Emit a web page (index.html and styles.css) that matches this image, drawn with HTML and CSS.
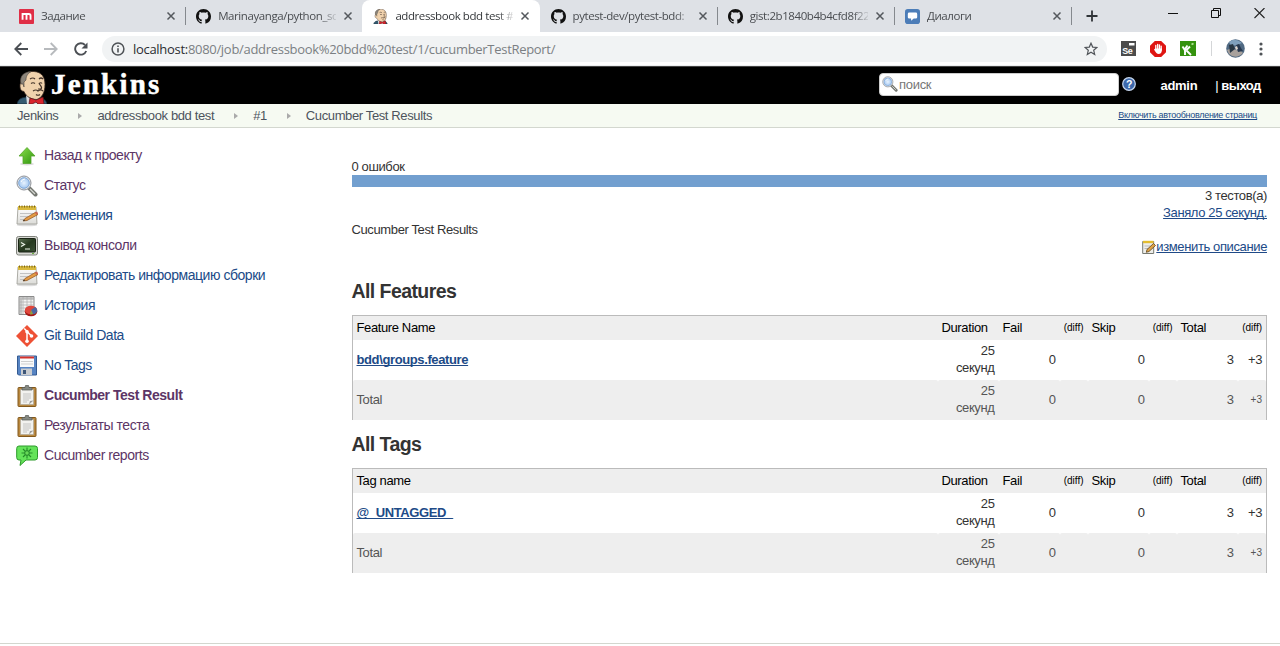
FILE: index.html
```html
<!DOCTYPE html>
<html lang="ru">
<head>
<meta charset="utf-8">
<title>addressbook bdd test #1</title>
<link rel="stylesheet" href="styles.css">
</head>
<body>
<svg class="defs" width="0" height="0">
  <defs>
    <linearGradient id="gGreen" x1="0" y1="0" x2="1" y2="1"><stop offset="0" stop-color="#8be04b"/><stop offset="1" stop-color="#2f9410"/></linearGradient>
    <linearGradient id="gScreen" x1="0" y1="0" x2="1" y2="1"><stop offset="0" stop-color="#5a7052"/><stop offset=".5" stop-color="#26391f"/><stop offset="1" stop-color="#3b4f35"/></linearGradient>
    <linearGradient id="gPaper" x1="0" y1="0" x2="0" y2="1"><stop offset="0" stop-color="#fff"/><stop offset="1" stop-color="#dcdcd8"/></linearGradient>
    <radialGradient id="gLens"><stop offset="0" stop-color="#e8f3ff"/><stop offset="1" stop-color="#a5c8f0"/></radialGradient>
  </defs>
  <symbol id="i-close" viewBox="0 0 10 10"><path d="M1.500 1.500l7 7M8.500 1.500l-7 7" stroke="#54585d" stroke-width="1.500" fill="none"/></symbol>
  <symbol id="i-github" viewBox="0 0 16 16"><path fill="#111" d="M8 0C3.580 0 0 3.580 0 8c0 3.540 2.290 6.530 5.470 7.590.4.070.55-.17.55-.38 0-.19-.01-.82-.01-1.490-2.010.37-2.530-.49-2.690-.94-.09-.23-.48-.94-.82-1.130-.28-.15-.68-.52-.01-.53.63-.01 1.080.58 1.230.82.720 1.210 1.870.87 2.330.66.070-.52.280-.87.510-1.070-1.780-.2-3.640-.89-3.640-3.950 0-.87.310-1.590.82-2.150-.08-.2-.36-1.020.080-2.120 0 0 .67-.21 2.200.82.640-.18 1.320-.27 2-.27s1.360.09 2 .27c1.530-1.040 2.200-.82 2.200-.82.440 1.100.160 1.920.080 2.120.510.560.820 1.270.820 2.150 0 3.070-1.870 3.750-3.650 3.950.290.250.540.730.540 1.480 0 1.070-.01 1.930-.01 2.200 0 .210.150.460.550.380A8.010 8.010 0 0 0 16 8c0-4.420-3.580-8-8-8z"/></symbol>
  <symbol id="i-jenkins" viewBox="0 0 30 33">
    <path d="M0 33c1-5 4-6 9-7h12c5 1 8 3 9 7z" fill="#345a70" stroke="#182b38" stroke-width=".8"/>
    <path d="M9 24l1 9h11l1-9z" fill="#d9dde0"/>
    <path d="M4 12C3 4 10 0 17 0.500c8 .5 11 6 11 13 0 8-3 13-8 15-6 0-11-3-13-8-3 0-4-3-4-5 0-2 0-3 1-3.500z" fill="#f0d2ad" stroke="#3a2a20" stroke-width=".8"/>
    <path d="M4 13C2 5 7 1 14 .6 10 3 9 6 9 9l-2 2v5l-1-3z" fill="#8c857b" stroke="#4a423a" stroke-width=".6"/>
    <path d="M13 8q3-2 5 0M22 8q2-2 4 0M14 12.500q2-1.500 4 0M22 12.500q2-1.500 3 0M22 12c1 3 4 4 2 6l-3 0M16 20q3-2 5 0 3-2 5 0M19 23.500q2 1.500 4 0" fill="none" stroke="#44342a" stroke-width="1.200"/>
    <path d="M13 27l6 2 7-3 1 7h-6l-2-2-4 2h-3z" fill="#d8242c" stroke="#61161a" stroke-width=".8"/>
  </symbol>
  <symbol id="i-lens" viewBox="0 0 22 22">
    <path d="M13 13l6.500 6.500" stroke="#737670" stroke-width="4" stroke-linecap="round"/><path d="M14 14l5 5" stroke="#d5d7d2" stroke-width="1.300"/>
    <circle cx="8" cy="8" r="7" fill="#e6e8e8" stroke="#8d9199" stroke-width="1"/><circle cx="8" cy="8" r="5.300" fill="url(#gLens)" stroke="#7fa8da"/>
    <path d="M5 7q1-3 4-3" stroke="#fff" fill="none"/>
  </symbol>
  <symbol id="i-note" viewBox="0 0 22 22">
    <ellipse cx="11" cy="20" rx="10.500" ry="1.300" fill="#ddd"/>
    <path d="M2 2h18l1 17H1z" fill="url(#gPaper)" stroke="#a3a39c" stroke-width=".9"/>
    <path d="M2 1h18v4H2z" fill="#d9b93c"/><path d="M3 1.500h16" stroke="#7b661c" stroke-dasharray="1 1.500" stroke-width="2"/>
    <path d="M4 8.500h13M4 11.500h8M4 14.500h5" stroke="#c2c2c2"/>
    <path d="M9 13.500L20 7l2 2.500-11 6-4 .5z" fill="#e39b43" stroke="#8d4f1b" stroke-width=".7"/><path d="M19 7.500l2-1 1.200 2-2 1.200z" fill="#c76250"/><path d="M7 16l1-1.500 1.200 1.200z" fill="#333"/>
  </symbol>
  <symbol id="i-clip" viewBox="0 0 20 22">
    <rect x="1" y="2.500" width="18" height="19" rx=".8" fill="#b9883f" stroke="#83591c"/>
    <path d="M3.500 4.500h13V19.500h-13z" fill="#f2f2ef" stroke="#aaa79f" stroke-width=".6"/>
    <path d="M6 9h8M6 11h8M6 13h8M6 15h6M6 17h4" stroke="#bebebe" stroke-width=".9"/>
    <path d="M12 19.500l1-3.500 3.500-.5z" fill="#9b9b98"/>
    <path d="M5 5V2.500h3L8.500.5h3l.5 2h3V5z" fill="#858983" stroke="#565954" stroke-width=".7"/>
  </symbol>
</svg>

<header class="tabs">
  <div class="tab"><svg class="fav" viewBox="0 0 16 16"><rect width="16" height="16" rx="1" fill="#e02e46"/><path d="M3.800 11.500V5.300H10.500q1.800 0 1.800 2v4.200M8 5.500v6" fill="none" stroke="#fff" stroke-width="2"/></svg><span class="tab-title">Задание</span><svg class="x"><use href="#i-close"/></svg></div>
  <div class="tab tab-line"><svg class="fav"><use href="#i-github"/></svg><span class="tab-title">Marinayanga/python_sc</span><svg class="x"><use href="#i-close"/></svg></div>
  <div class="tab active"><svg class="fav"><use href="#i-jenkins"/></svg><span class="tab-title">addressbook bdd test #</span><svg class="x"><use href="#i-close"/></svg></div>
  <div class="tab"><svg class="fav"><use href="#i-github"/></svg><span class="tab-title">pytest-dev/pytest-bdd:</span><svg class="x"><use href="#i-close"/></svg></div>
  <div class="tab tab-line"><svg class="fav"><use href="#i-github"/></svg><span class="tab-title">gist:2b1840b4b4cfd8f22</span><svg class="x"><use href="#i-close"/></svg></div>
  <div class="tab tab-line"><svg class="fav" viewBox="0 0 16 16"><rect width="16" height="16" rx="3" fill="#4c7db8"/><path d="M4.500 3.800h7q1.500 0 1.500 1.500v3.400q0 1.500-1.500 1.500H9.300L6.500 12.500v-2.300h-2Q3 10.200 3 8.700V5.300q0-1.500 1.500-1.500z" fill="#fff"/></svg><span class="tab-title">Диалоги</span><svg class="x"><use href="#i-close"/></svg></div>
  <div class="new-tab tab-line"><svg width="12" height="12"><path d="M6 .5v11M.5 6h11" stroke="#303438" stroke-width="1.800"/></svg></div>
  <div class="win">
    <svg width="10" height="12"><path d="M0 5.500h10" stroke="#111"/></svg>
    <svg width="10" height="12" fill="none" stroke="#111"><path d="M.5 2.500h7v7h-7zM2.500 2.500v-2h7v7h-2"/></svg>
    <svg width="11" height="12"><path d="M.5 0l10 10M10.500 0l-10 10" stroke="#222" stroke-width="1.100"/></svg>
  </div>
</header>

<div class="toolbar">
  <div class="nav">
    <svg width="14" height="14" fill="none" stroke="#4b4f54" stroke-width="1.800"><path d="M14 7H1.500M7.300 1L1.300 7l6 6"/></svg>
    <svg width="14" height="14" fill="none" stroke="#b7babd" stroke-width="1.800"><path d="M0 7h12.500M6.700 1l6 6-6 6"/></svg>
    <svg width="14" height="14"><path d="M12.200 9A5.700 5.700 0 1 1 11 3" fill="none" stroke="#4b4f54" stroke-width="1.900"/><path d="M13.500.5v6h-6z" fill="#4b4f54"/></svg>
  </div>
  <div class="omni">
    <svg width="14" height="14"><circle cx="7" cy="7" r="5.900" fill="none" stroke="#4f5357" stroke-width="1.500"/><path d="M7 6.200v4.200M7 3.400v1.600" stroke="#4f5357" stroke-width="1.600"/></svg>
    <span class="url"><b>localhost:</b>8080/job/addressbook%20bdd%20test/1/cucumberTestReport/</span>
    <svg width="14" height="14" viewBox="0 0 14 14"><path d="M7 1.200l1.700 3.900 4.200.4-3.200 2.800 1 4.100L7 10.200l-3.700 2.200 1-4.100L1.100 5.500l4.200-.4z" fill="none" stroke="#505459" stroke-width="1.200"/></svg>
  </div>
  <div class="ext">
    <svg width="15" height="15"><path d="M0 0h15v15H0z" fill="#4c4c4c"/><path d="M8 2h5.500v2.500H8z" fill="#fff"/><text x="1.200" y="13" class="se">Se</text></svg>
    <svg width="16" height="16" viewBox="0 0 16 16"><path d="M4.800 0h6.400L16 4.800v6.400L11.200 16H4.800L0 11.200V4.800z" fill="#df1512"/><path d="M5.800 9V4.500M7.700 8V3.300M9.500 8V3.800M11.200 9V5.200" stroke="#fff" stroke-width="1.300" stroke-linecap="round"/><path d="M5.200 7.500h6.600v2.200q-.4 3.300-3.300 3.300Q6.500 13 4 8.500z" fill="#fff"/></svg>
    <svg width="16" height="15"><path d="M0 0h16v15H0z" fill="#35930f"/><path d="M2.500 5.500l2 3 3-4M5 8.500V14M6.500 9.500L11 14M6 9.500l4-4" stroke="#fff" stroke-width="1.900" fill="none"/><path d="M11.500 3.500l2-1" stroke="#b8e79c" stroke-width="1.800"/></svg>
    <i class="bar"></i>
    <svg width="19" height="19" viewBox="0 0 19 19"><circle cx="9.500" cy="9.500" r="9.300" fill="#506982"/><path d="M3 3q6-5 13 1l-5 2-6 1z" fill="#7fa0bd"/><path d="M1 11l5-2 4 2 5 1 2 2q-7 7-14 1z" fill="#a8a19c"/><path d="M3 6l4-1 2 5-5 4z" fill="#283744"/><path d="M10 6l3-1 2 4 2 3-5 1z" fill="#27384f"/><path d="M9 8l2-1 1 3-2 1z" fill="#e1d8d0"/></svg>
    <svg width="4" height="14" fill="#4f5357"><circle cx="2" cy="2" r="1.600"/><circle cx="2" cy="7" r="1.600"/><circle cx="2" cy="12" r="1.600"/></svg>
  </div>
</div>

<div class="head">
  <div class="brand"><svg class="butler"><use href="#i-jenkins"/></svg><span class="wordmark">Jenkins</span></div>
  <div class="search"><svg width="16" height="16"><use href="#i-lens"/></svg><span>поиск</span></div>
  <svg class="help" viewBox="0 0 14 14"><circle cx="7" cy="7" r="6.300" fill="#3c69ac" stroke="#c8d8ee" stroke-width="1.200"/><text x="7" y="10.800" class="q">?</text></svg>
  <b class="admin">admin</b><b class="logout"><span>|</span> выход</b>
</div>
<nav class="crumbs">
  <span>Jenkins</span><i></i><span>addressbook bdd test</span><i></i><span>#1</span><i></i><span>Cucumber Test Results</span>
  <a href="#" class="auto">Включить автообновление страниц</a>
</nav>

<div class="page">
  <aside class="side">
    <a class="seen"><svg viewBox="0 0 22 22"><ellipse cx="11" cy="19" rx="7" ry="1.500" fill="#ddd"/><path d="M11 2.500l8 8.500h-4v7.500H7V11H3z" fill="url(#gGreen)" stroke="#54a52b" stroke-width=".8"/></svg>Назад к проекту</a>
    <a class="seen"><svg><use href="#i-lens"/></svg>Статус</a>
    <a><svg><use href="#i-note"/></svg>Изменения</a>
    <a class="seen"><svg viewBox="0 0 22 22"><rect x=".5" y="1.500" width="21" height="18.500" rx="2" fill="#d8d9d4" stroke="#80837c"/><rect x="2.500" y="3.500" width="17" height="13.500" rx=".8" fill="url(#gScreen)" stroke="#192314"/><path d="M5 7.500l3.500 2-3.500 2M9 14h5" stroke="#eef5ea" stroke-width="1.200" fill="none"/><path d="M16 18.500h2" stroke="#68b13a"/></svg>Вывод консоли</a>
    <a><svg><use href="#i-note"/></svg>Редактировать информацию сборки</a>
    <a><svg viewBox="0 0 22 22"><path d="M3 1.500h15v18H3z" fill="#f4f4f2" stroke="#8b8b8b"/><path d="M3 4h15M3 7h15M3 10h15M3 13h15M3 16h15M7 2v17M11 2v17M15 2v17" stroke="#b2b2b2" stroke-width=".8"/><path d="M3 2h15v2.500H3zM3 2h3v17H3z" fill="#aaa" opacity=".6"/><ellipse cx="15" cy="16.500" rx="6.300" ry="4.800" fill="#a51815"/><ellipse cx="15" cy="15" rx="6.200" ry="4.300" fill="#e0473c"/><path d="M15 15l4-3q3 2 2 5-2 2.500-4 2.300z" fill="#4c67a0"/><path d="M15 15l2 4.300-3 .2z" fill="#83a844"/></svg>История</a>
    <a><svg viewBox="0 0 22 22"><path d="M11 0l11 11-11 11L0 11z" fill="#ee5135"/><path d="M8.200 3.500L11 6.300v10.200M11.500 7l4 4" stroke="#fff" stroke-width="1.500" fill="none"/><g fill="#fff"><circle cx="11" cy="6.800" r="1.800"/><circle cx="11" cy="16.300" r="1.800"/><circle cx="15.500" cy="11" r="1.800"/></g></svg>Git Build Data</a>
    <a><svg viewBox="0 0 22 22"><path d="M1.500 1h19v19h-18l-1-1z" fill="#5784c3" stroke="#345b92"/><path d="M4 1.500h14V12H4z" fill="#fafafa"/><path d="M4 1.500h14v2H4z" fill="#d4322b"/><path d="M5 6.500h12M5 9h12" stroke="#cfcfcf"/><path d="M5 13.500h11V20H5z" fill="#c9ccd0"/><path d="M7 15h3v4H7z" fill="#3d5678"/></svg>No Tags</a>
    <a class="seen current"><svg><use href="#i-clip"/></svg>Cucumber Test Result</a>
    <a class="seen"><svg><use href="#i-clip"/></svg>Результаты теста</a>
    <a class="seen"><svg viewBox="0 0 22 22"><path d="M3 1h16q2.500 0 2.500 2.500v9q0 2.500-2.500 2.500H10l-6 5.500 1-5.500H3Q.7 15 .7 12.500v-9Q.7 1 3 1z" fill="#65e35a" stroke="#2c9a2a"/><path d="M11 2.500v11M5.500 8h11M7 4l8 8M15 4l-8 8" stroke="#258d28" stroke-width="1.100"/><circle cx="11" cy="8" r="2.300" fill="#67d957" stroke="#24852a"/></svg>Cucumber reports</a>
  </aside>

  <main class="main">
    <div class="fails">0 ошибок</div>
    <div class="progress"></div>
    <div class="summary">3 тестов(а)<br><a href="#">Заняло 25 секунд.</a></div>
    <div class="desc">Cucumber Test Results</div>
    <div class="edit"><svg width="14" height="14" viewBox="0 0 14 14"><path d="M.7 1.500h11v12H.7z" fill="#eeeeea" stroke="#777a73"/><path d="M1 .8h10.500v2.400H1z" fill="#e3bd2f"/><path d="M2.500 6h6M2.500 8.500h4" stroke="#bbb"/><path d="M5 9.500l6.500-6 2 2-6.500 6-2.700.8z" fill="#e0a345" stroke="#5d421a" stroke-width=".8"/></svg><a href="#">изменить описание</a></div>
    <h2 class="first">All Features</h2>
    <table>
      <colgroup><col class="c-name"><col class="c-dur"><col class="c-num"><col class="c-diff"><col class="c-num"><col class="c-diff"><col class="c-num"><col class="c-last"></colgroup>
      <tr class="th"><td>Feature Name</td><td>Duration</td><td>Fail</td><td class="d">(diff)</td><td>Skip</td><td class="d">(diff)</td><td>Total</td><td class="d">(diff)</td></tr>
      <tr><td><a href="#">bdd\groups.feature</a></td><td>25 секунд</td><td>0</td><td></td><td>0</td><td></td><td>3</td><td>+3</td></tr>
      <tr class="sum"><td>Total</td><td>25 секунд</td><td>0</td><td></td><td>0</td><td></td><td>3</td><td class="s">+3</td></tr>
    </table>
    <h2>All Tags</h2>
    <table>
      <colgroup><col class="c-name"><col class="c-dur"><col class="c-num"><col class="c-diff"><col class="c-num"><col class="c-diff"><col class="c-num"><col class="c-last"></colgroup>
      <tr class="th"><td>Tag name</td><td>Duration</td><td>Fail</td><td class="d">(diff)</td><td>Skip</td><td class="d">(diff)</td><td>Total</td><td class="d">(diff)</td></tr>
      <tr><td><a href="#">@_UNTAGGED_</a></td><td>25 секунд</td><td>0</td><td></td><td>0</td><td></td><td>3</td><td>+3</td></tr>
      <tr class="sum"><td>Total</td><td>25 секунд</td><td>0</td><td></td><td>0</td><td></td><td>3</td><td class="s">+3</td></tr>
    </table>
  </main>
</div>
<footer class="foot"></footer>
</body>
</html>
```
FILE: styles.css
```css
* { box-sizing: border-box; }
body {
  margin: 0;
  height: 646px;
  overflow: hidden;
  display: flex;
  flex-direction: column;
  background: #fff;
  color: #333;
  font: 13px/17px "Liberation Sans", Arial, sans-serif;
  letter-spacing: -.38px;
}
svg { flex: none; display: block; }
.defs { position: absolute; }

/* browser tabs */
.tabs { display: flex; height: 32px; padding-left: 8px; background: #dee1e6; flex: none; }
.tab { position: relative; display: flex; align-items: center; width: 177.200px; padding: 0 9px 0 11px; flex: none; }
.tab-line::before { content: ""; position: absolute; left: 0; top: 7px; width: 1px; height: 18px; background: #85898e; }
.fav { width: 15px; height: 15px; margin-right: 7px; }
.tab-title {
  width: 118px;
  white-space: nowrap;
  font: 11.500px/16px "Open Sans", "Noto Sans", sans-serif;
  letter-spacing: -.42px;
  color: #4a4d51;
  margin-right: 7px;
  -webkit-mask-image: linear-gradient(90deg, #000 102px, transparent 121px);
  mask-image: linear-gradient(90deg, #000 102px, transparent 121px);
}
.x { width: 10px; height: 10px; }
.active { background: #fff; border-radius: 8px 8px 0 0; }
.active .tab-title { color: #34373a; }
.new-tab { position: relative; width: 97px; padding: 10px 0 0 15px; }
.win { display: flex; gap: 33px; padding: 8px 0 0 0; }

/* browser toolbar */
.toolbar { display: flex; align-items: center; height: 34px; padding: 0 17px 0 14px; border-bottom: 1px solid #eceeef; flex: none; }
.nav { display: flex; gap: 16px; width: 88px; }
.omni { display: flex; align-items: center; width: 1005px; height: 26px; border-radius: 13px; background: #f1f3f4; padding: 0 9px 0 9px; }
.url { flex: 1; margin-left: 8px; font: 13px/20px "Open Sans", "Noto Sans", sans-serif; letter-spacing: -.3px; color: #7b7f83; white-space: nowrap; }
.url b { font-weight: 400; color: #2b2e31; }
.ext { flex: 1; display: flex; align-items: center; justify-content: space-between; padding-left: 14px; }
.bar { width: 1px; height: 15px; background: #d4d6d8; }
.se { font: bold 9px "Liberation Sans", sans-serif; fill: #fff; }

/* page header */
.head { display: flex; align-items: center; height: 38px; background: #000; border-top: 1px solid #444; color: #fff; flex: none; letter-spacing: -.3px; }
.brand { display: flex; align-items: flex-end; width: 879px; height: 37px; padding-left: 17px; }
.butler { width: 30px; height: 33px; }
.wordmark { margin-left: 4px; padding-bottom: 1px; font: bold 29px/37px "Liberation Serif", serif; letter-spacing: 2.200px; -webkit-text-stroke: .5px #fff; }
.search { display: flex; align-items: center; width: 240px; height: 23px; margin-bottom: 3px; padding-left: 2px; background: #fff; border: 1px solid #ccc; border-radius: 4px; color: #777; }
.search span { margin-left: 1px; }
.help { width: 14px; height: 14px; margin: 0 0 3px 3px; }
.q { font: bold 10.500px "Liberation Sans", sans-serif; fill: #fff; text-anchor: middle; }
.admin { margin-left: 24.500px; }
.logout { margin-left: 18px; letter-spacing: -.5px; }
.logout span { font-weight: 400; }

.crumbs { display: flex; align-items: center; height: 24px; padding: 0 23px 0 17px; background: #f6faf2; border-bottom: 1px solid #d3d7cf; color: #4d545d; flex: none; }
.crumbs i { width: 4px; margin: 1px 15px 0 20px; border-left: 4px solid #aaa; border-top: 3.500px solid transparent; border-bottom: 3.500px solid transparent; }
.auto { margin-left: auto; font-size: 9px; letter-spacing: -.29px; }
a { color: #204a87; text-decoration-skip-ink: none; }

/* page body */
.page { display: flex; flex: 1; min-height: 0; }
.side { width: 351.500px; padding: 12px 0 0 16px; flex: none; }
.side a { display: flex; align-items: center; height: 30px; gap: 6px; font-size: 14px; letter-spacing: -.46px; }
.side svg { width: 22px; height: 22px; margin-top: 1px; }
.side .seen { color: #5c3566; }
.side .current { font-weight: bold; }
.main { width: 915.500px; padding-top: 30px; }
.progress { height: 12px; background: #729fcf; }
.summary { text-align: right; }
.edit { display: flex; justify-content: flex-end; align-items: center; height: 17px; }
h2 { margin: 0; height: 48px; padding-top: 12px; font: bold 19.500px/24px "Liberation Sans", Arial, sans-serif; letter-spacing: -.57px; }
.first { margin-top: 12px; }
table { width: 915.500px; table-layout: fixed; border-collapse: separate; border-spacing: 0; border: 1px solid #bbb; border-bottom: 0; }
td { padding: 2px 4px 4px; height: 40px; text-align: right; vertical-align: middle; }
td:first-child { text-align: left; }
td a { font-weight: bold; }
.th td { height: 24px; background: #eee; color: #000; text-align: left; }
.sum td { background: #eee; color: #555; border-radius: 2px 2px 0 0; }
.th .d { font-size: 10px; letter-spacing: 0; text-align: right; padding-left: 0; }
.sum .s { font-size: 10px; letter-spacing: 0; }
.c-name { width: 585px; }
.c-dur { width: 61px; }
.c-num { width: 61px; }
.c-diff { width: 28px; }
.foot { height: 3px; border-top: 1px solid #d3d7cf; flex: none; }
```
